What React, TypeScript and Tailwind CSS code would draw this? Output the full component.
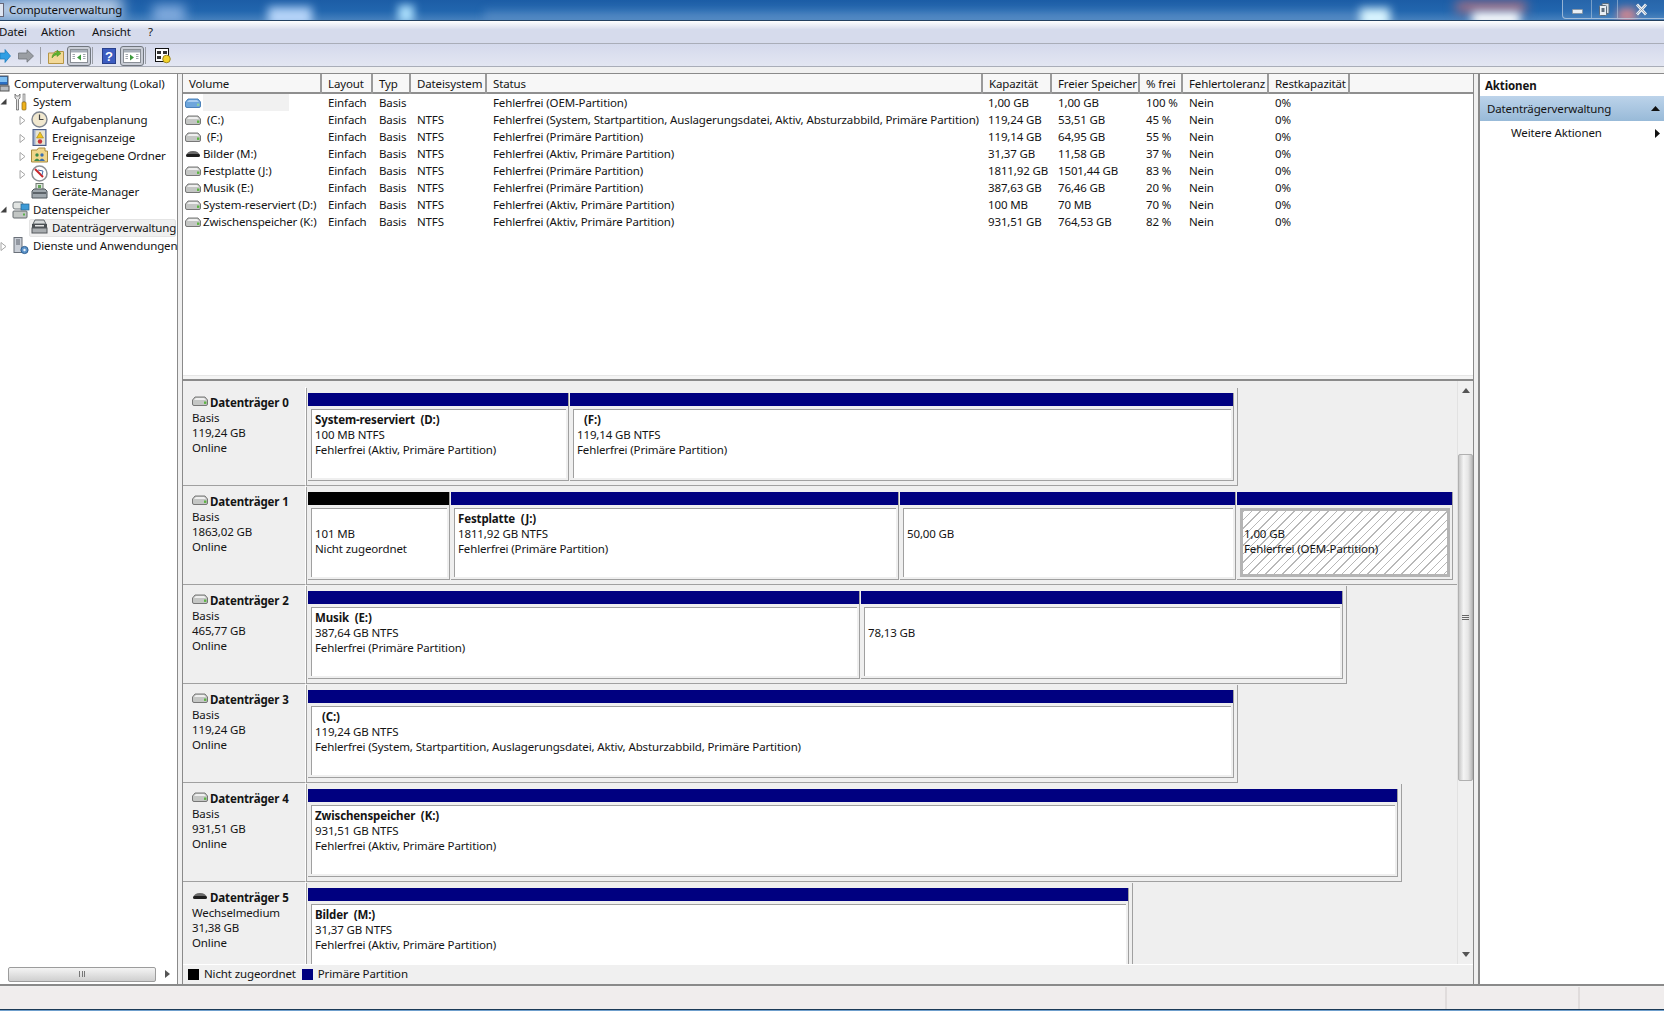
const font = "font-['Noto_Sans','Open_Sans',sans-serif]";

function Drive({ kind = 'gray' }: { kind?: 'gray' | 'blue' | 'dark' }) {
  if (kind === 'dark') {
    return (
      <svg width="16" height="10" viewBox="0 0 16 10" className="shrink-0">
        <path d="M1 7 Q2 2 8 2 Q14 2 15 7 Z" fill="#6a6a6a" />
        <rect x="1" y="5" width="14" height="3" rx="1.5" fill="#1f1f1f" />
      </svg>
    );
  }
  const body = kind === 'blue' ? '#6ea6dc' : '#c4c6c4';
  const top = kind === 'blue' ? '#a9cdf0' : '#efefef';
  const line = kind === 'blue' ? '#3f78b4' : '#6b6b6b';
  return (
    <svg width="16" height="10" viewBox="0 0 16 10" className="shrink-0">
      <path d="M0.5 4 L3 1 H13 L15.5 4 V8 Q15.5 9.5 14 9.5 H2 Q0.5 9.5 0.5 8 Z" fill={body} stroke={line} strokeWidth="0.9" />
      <path d="M2 4 L4 2 H12 L14 4 Z" fill={top} />
      <rect x="12" y="5.5" width="2.4" height="2.4" fill={kind === 'blue' ? '#8fd0a0' : '#5cb543'} />
    </svg>
  );
}

function Expander({ open }: { open?: boolean }) {
  return open ? (
    <svg width="7" height="7" viewBox="0 0 7 7"><path d="M6.5 0.5 V6.5 H0.5 Z" fill="#404040" /></svg>
  ) : (
    <svg width="7" height="9" viewBox="0 0 7 9"><path d="M1 0.5 L6 4.5 L1 8.5 Z" fill="#fff" stroke="#a6a6a6" /></svg>
  );
}

function TreeIcon({ name }: { name: string }) {
  switch (name) {
    case 'root':
      return (
        <svg width="16" height="18" viewBox="0 0 16 18">
          <rect x="0" y="1" width="11" height="9" fill="#2a6fc4" stroke="#555" />
          <rect x="1" y="2" width="9" height="5" fill="#7fc0f2" />
          <rect x="3" y="11" width="9" height="5" fill="#b8bcc0" stroke="#555" />
        </svg>
      );
    case 'tools':
      return (
        <svg width="16" height="18" viewBox="0 0 16 18">
          <path d="M2 1 V5 L3.5 6.5 V17 H5.5 V6.5 L7 5 V1 L5.5 3 H3.5 Z" fill="#e4e4e4" stroke="#555" strokeWidth="0.7" />
          <rect x="10" y="1" width="2" height="8" fill="#ddd" stroke="#666" strokeWidth="0.6" />
          <rect x="9" y="9" width="4" height="8" rx="1" fill="#efb21d" stroke="#8a6510" strokeWidth="0.7" />
        </svg>
      );
    case 'clock':
      return (
        <svg width="17" height="17" viewBox="0 0 17 17">
          <circle cx="8.5" cy="8.5" r="7.5" fill="#f1e8cf" stroke="#7f8690" strokeWidth="1.4" />
          <path d="M8.5 3.5 V8.5 H12.5" fill="none" stroke="#444" strokeWidth="1.2" />
        </svg>
      );
    case 'log':
      return (
        <svg width="15" height="17" viewBox="0 0 15 17">
          <rect x="1" y="0.5" width="13" height="16" fill="#9fb0d0" stroke="#4b5c86" />
          <rect x="3.5" y="1.5" width="9.5" height="14" fill="#e9e4cf" />
          <path d="M8 3 L11.5 9 H4.5 Z" fill="#f2c51c" stroke="#8a6e10" strokeWidth="0.5" />
          <circle cx="8" cy="12.5" r="2.2" fill="#c8323a" />
        </svg>
      );
    case 'share':
      return (
        <svg width="17" height="16" viewBox="0 0 17 16">
          <path d="M0.5 3 H6 L7.5 1 H14 V4 H16.5 V15 H0.5 Z" fill="#f0d68a" stroke="#a88a3c" />
          <circle cx="6" cy="8" r="1.7" fill="#3d8a4a" />
          <path d="M3 14 Q6 9 9 14 Z" fill="#3d8a4a" />
          <circle cx="11" cy="8" r="1.7" fill="#3a6fb0" />
          <path d="M8 14 Q11 9 14 14 Z" fill="#3a6fb0" />
        </svg>
      );
    case 'gauge':
      return (
        <svg width="17" height="17" viewBox="0 0 17 17">
          <circle cx="8.5" cy="8.5" r="7.5" fill="#fff" stroke="#8b8f94" strokeWidth="1.5" />
          <path d="M4 4 L12 12" stroke="#c9252b" strokeWidth="2" />
          <path d="M7 5 L12 6 L11 10" fill="none" stroke="#3f6aa8" strokeWidth="1" />
        </svg>
      );
    case 'device':
      return (
        <svg width="17" height="16" viewBox="0 0 17 16">
          <rect x="5" y="0.5" width="7" height="7" fill="#dfe4de" stroke="#6f7a70" />
          <rect x="7" y="2" width="3" height="3" fill="#63a85a" />
          <path d="M1 8 L3 6 H14 L16 8 V15 H1 Z" fill="#9fa7ad" stroke="#4f565c" />
          <rect x="2" y="9" width="13" height="2" fill="#5c6369" />
        </svg>
      );
    case 'storage':
      return (
        <svg width="18" height="18" viewBox="0 0 18 18">
          <rect x="1" y="1" width="10" height="7" rx="2" fill="#e1e4e2" stroke="#71787c" />
          <rect x="9" y="3" width="8" height="6" fill="#3d9ad6" stroke="#2a638e" strokeWidth="0.7" />
          <rect x="1" y="10" width="14" height="7" rx="1" fill="#c2c6c4" stroke="#646a6e" />
          <rect x="11" y="12.5" width="2" height="2" fill="#58b04a" />
        </svg>
      );
    case 'disk':
      return (
        <svg width="17" height="15" viewBox="0 0 17 15">
          <path d="M2 5 L4 1 H13 L15 5 Z" fill="#d6d9da" stroke="#5f6568" />
          <rect x="1" y="5" width="15" height="4" fill="#4b5054" />
          <rect x="1" y="9" width="15" height="5" fill="#a9adb0" stroke="#55595c" />
          <rect x="4" y="6" width="9" height="1.5" fill="#e6e6e6" />
        </svg>
      );
    default:
      return (
        <svg width="16" height="18" viewBox="0 0 16 18">
          <rect x="1" y="0.5" width="8" height="15" fill="#c9ced6" stroke="#6a7079" />
          <path d="M3 3 H7 M3 5 H7 M3 7 H7" stroke="#5b616a" />
          <circle cx="11.5" cy="13" r="3.6" fill="#5c93c9" stroke="#2d5f92" />
          <circle cx="11.5" cy="13" r="1.2" fill="#e8f1fa" />
        </svg>
      );
  }
}

const tree = [
  { label: 'Computerverwaltung (Lokal)', icon: 'root', icx: -3, tx: 14 },
  { label: 'System', icon: 'tools', icx: 13, tx: 33, exp: 'open', ex: 0 },
  { label: 'Aufgabenplanung', icon: 'clock', icx: 31, tx: 52, exp: 'closed', ex: 19 },
  { label: 'Ereignisanzeige', icon: 'log', icx: 32, tx: 52, exp: 'closed', ex: 19 },
  { label: 'Freigegebene Ordner', icon: 'share', icx: 31, tx: 52, exp: 'closed', ex: 19 },
  { label: 'Leistung', icon: 'gauge', icx: 31, tx: 52, exp: 'closed', ex: 19 },
  { label: 'Geräte-Manager', icon: 'device', icx: 31, tx: 52 },
  { label: 'Datenspeicher', icon: 'storage', icx: 12, tx: 33, exp: 'open', ex: 0 },
  { label: 'Datenträgerverwaltung', icon: 'disk', icx: 31, tx: 52, selected: true },
  { label: 'Dienste und Anwendungen', icon: 'services', icx: 13, tx: 33, exp: 'closed', ex: 0 },
];

const columns = ['Volume', 'Layout', 'Typ', 'Dateisystem', 'Status', 'Kapazität', 'Freier Speicher', '% frei', 'Fehlertoleranz', 'Restkapazität'];

const volumes = [
  { name: '', kind: 'blue', fs: '', status: 'Fehlerfrei (OEM-Partition)', cap: '1,00 GB', free: '1,00 GB', pct: '100 %' },
  { name: '(C:)', indent: true, kind: 'gray', fs: 'NTFS', status: 'Fehlerfrei (System, Startpartition, Auslagerungsdatei, Aktiv, Absturzabbild, Primäre Partition)', cap: '119,24 GB', free: '53,51 GB', pct: '45 %' },
  { name: '(F:)', indent: true, kind: 'gray', fs: 'NTFS', status: 'Fehlerfrei (Primäre Partition)', cap: '119,14 GB', free: '64,95 GB', pct: '55 %' },
  { name: 'Bilder (M:)', kind: 'dark', fs: 'NTFS', status: 'Fehlerfrei (Aktiv, Primäre Partition)', cap: '31,37 GB', free: '11,58 GB', pct: '37 %' },
  { name: 'Festplatte (J:)', kind: 'gray', fs: 'NTFS', status: 'Fehlerfrei (Primäre Partition)', cap: '1811,92 GB', free: '1501,44 GB', pct: '83 %' },
  { name: 'Musik (E:)', kind: 'gray', fs: 'NTFS', status: 'Fehlerfrei (Primäre Partition)', cap: '387,63 GB', free: '76,46 GB', pct: '20 %' },
  { name: 'System-reserviert (D:)', kind: 'gray', fs: 'NTFS', status: 'Fehlerfrei (Aktiv, Primäre Partition)', cap: '100 MB', free: '70 MB', pct: '70 %' },
  { name: 'Zwischenspeicher (K:)', kind: 'gray', fs: 'NTFS', status: 'Fehlerfrei (Aktiv, Primäre Partition)', cap: '931,51 GB', free: '764,53 GB', pct: '82 %' },
] as const;

type Part = { w: number; title?: string; indent?: boolean; size?: string; state?: string; black?: boolean; oem?: boolean };

const disks: { name: string; type: string; size: string; kind: 'gray' | 'dark'; full?: boolean; parts: Part[] }[] = [
  {
    name: 'Datenträger 0', type: 'Basis', size: '119,24 GB', kind: 'gray',
    parts: [
      { w: 261, title: 'System-reserviert  (D:)', size: '100 MB NTFS', state: 'Fehlerfrei (Aktiv, Primäre Partition)' },
      { w: 664, title: '(F:)', indent: true, size: '119,14 GB NTFS', state: 'Fehlerfrei (Primäre Partition)' },
    ],
  },
  {
    name: 'Datenträger 1', type: 'Basis', size: '1863,02 GB', kind: 'gray', full: true,
    parts: [
      { w: 142, black: true, size: '101 MB', state: 'Nicht zugeordnet' },
      { w: 448, title: 'Festplatte  (J:)', size: '1811,92 GB NTFS', state: 'Fehlerfrei (Primäre Partition)' },
      { w: 336, size: '50,00 GB' },
      { w: 216, oem: true, size: '1,00 GB', state: 'Fehlerfrei (OEM-Partition)' },
    ],
  },
  {
    name: 'Datenträger 2', type: 'Basis', size: '465,77 GB', kind: 'gray',
    parts: [
      { w: 552, title: 'Musik  (E:)', size: '387,64 GB NTFS', state: 'Fehlerfrei (Primäre Partition)' },
      { w: 482, size: '78,13 GB' },
    ],
  },
  {
    name: 'Datenträger 3', type: 'Basis', size: '119,24 GB', kind: 'gray',
    parts: [{ w: 926, title: '(C:)', indent: true, size: '119,24 GB NTFS', state: 'Fehlerfrei (System, Startpartition, Auslagerungsdatei, Aktiv, Absturzabbild, Primäre Partition)' }],
  },
  {
    name: 'Datenträger 4', type: 'Basis', size: '931,51 GB', kind: 'gray',
    parts: [{ w: 1090, title: 'Zwischenspeicher  (K:)', size: '931,51 GB NTFS', state: 'Fehlerfrei (Aktiv, Primäre Partition)' }],
  },
  {
    name: 'Datenträger 5', type: 'Wechselmedium', size: '31,38 GB', kind: 'dark',
    parts: [{ w: 821, title: 'Bilder  (M:)', size: '31,37 GB NTFS', state: 'Fehlerfrei (Aktiv, Primäre Partition)' }],
  },
];

function Partition({ part }: { part: Part }) {
  return (
    <div className="flex h-[88px] shrink-0 flex-col border-r border-b border-[#a0a0a0]" style={{ width: part.w }}>
      <div className={part.black ? 'h-[13px] bg-black' : 'h-[13px] bg-[#000080]'} />
      <div className="flex flex-1 pt-[3px] pr-[2px] pb-[2px] pl-[3px]">
        <div
          className={
            part.oem
              ? 'flex-1 border-[3px] border-[#b4b4b4] bg-[repeating-linear-gradient(135deg,#b8b8b8_0,#b8b8b8_1px,#ffffff_1px,#ffffff_6px)] pl-px'
              : 'flex-1 border-t border-l border-[#a0a0a0] bg-white pt-[2px] pl-[3px]'
          }
        >
          <div className={part.indent ? 'h-[15px] pl-[7px] font-bold leading-[15px]' : 'h-[15px] font-bold leading-[15px]'}>
            <span className="whitespace-pre">{part.title}</span>
          </div>
          <div className="h-[15px] leading-[15px]">{part.size}</div>
          <div className="h-[15px] leading-[15px]">{part.state}</div>
        </div>
      </div>
    </div>
  );
}

function DiskRow({ disk }: { disk: (typeof disks)[number] }) {
  return (
    <div className="flex h-[99px] shrink-0">
      <div className="w-[123px] shrink-0 border-r border-b border-r-white border-b-[#a0a0a0] bg-[#efefef] pt-[8px] pl-[9px] leading-[15px]">
        <div className="flex h-[15px] items-start gap-[2px] font-bold">
          <span className="pt-[1px]"><Drive kind={disk.kind} /></span>
          <span>{disk.name}</span>
        </div>
        <div>{disk.type}</div>
        <div>{disk.size}</div>
        <div>Online</div>
      </div>
      <div
        className={
          disk.full
            ? 'mt-px flex h-[98px] w-fit gap-px border-b border-l border-[#a0a0a0] pt-[5px] pr-[4px] pl-px'
            : 'mt-px flex h-[98px] w-fit gap-px border-r border-b border-l border-[#a0a0a0] pt-[5px] pr-[3px] pl-px'
        }
      >
        {disk.parts.map((p, i) => (
          <Partition key={i} part={p} />
        ))}
      </div>
    </div>
  );
}

function WindowButtons() {
  return (
    <div className="absolute top-0 right-0 flex h-[19px] w-[102px] rounded-bl-[4px] border-b border-l border-[#c5d5e5]/70 bg-white/5">
      <div className="flex w-[29px] items-center justify-center border-r border-[#c5d5e5]/50 pt-[5px]">
        <div className="h-[5px] w-[11px] rounded-[1px] border border-[#8a99a8] bg-[#e8eef4]" />
      </div>
      <div className="flex w-[26px] items-center justify-center border-r border-[#c5d5e5]/50">
        <svg width="11" height="13" viewBox="0 0 11 13">
          <rect x="3" y="0.5" width="7" height="10" rx="1" fill="#d5dee8" stroke="#5c6c7c" />
          <rect x="0.5" y="2.5" width="7" height="10" rx="1" fill="#e8eef4" stroke="#5c6c7c" />
          <rect x="2.5" y="5" width="3" height="4" fill="#5c6c7c" />
        </svg>
      </div>
      <div className="flex flex-1 items-center justify-center">
        <svg width="13" height="13" viewBox="0 0 13 13">
          <path d="M2 1.5 L11 11.5 M11 1.5 L2 11.5" fill="none" stroke="#e8eef4" strokeWidth="2.8" />
          <path d="M1 1 L12 12 M12 1 L1 12" stroke="#68788a" strokeWidth="0.5" />
        </svg>
      </div>
    </div>
  );
}

function TitleBar() {
  return (
    <div className="relative h-[21px] shrink-0 overflow-hidden border-b border-[#24405f] bg-[linear-gradient(180deg,#1c5da6_0%,#2266ae_55%,#4580bd_100%)]">
      <div className="absolute top-[-3px] left-[-8px] h-[24px] w-[130px] bg-[#b9cde6] blur-[7px]" />
      <div className="absolute top-[5px] left-[153px] h-[20px] w-[32px] bg-[#7fa9dc] blur-[6px]" />
      <div className="absolute top-[7px] left-[268px] h-[20px] w-[44px] bg-[#b4d3f8] blur-[5px]" />
      <div className="absolute top-[5px] left-[398px] h-[18px] w-[16px] bg-[#a8dcfb] blur-[4px]" />
      <div className="absolute top-[10px] left-[484px] h-[14px] w-[880px] bg-[#6595cc]/50 blur-[4px]" />
      <div className="absolute top-[8px] left-[1360px] h-[20px] w-[30px] bg-[#d9f5ff] blur-[5px]" />
      <div className="absolute top-[2px] left-[1456px] h-[10px] w-[70px] bg-[#b9707c] blur-[6px]" />
      <div className="absolute top-[12px] left-[1472px] h-[14px] w-[48px] bg-white blur-[5px]" />
      <div className="absolute top-[8px] left-[1618px] h-[14px] w-[18px] bg-[#c9808c] blur-[4px]" />
      <div className="relative flex h-full items-center pl-[9px] leading-none text-[#101010]">Computerverwaltung</div>
      <div className="absolute top-[3px] left-[-3px] h-[14px] w-[7px] border border-[#667] bg-[#dfe6f2]" />
      <WindowButtons />
    </div>
  );
}

function Toolbar() {
  const pressed = 'flex h-[20px] w-[24px] items-center justify-center rounded-[3px] border border-[#71777f] bg-[#c9cdd6]';
  const sep = 'h-[17px] w-px bg-[#9a9ea6]';
  const Pane = ({ side }: { side: 'left' | 'right' }) => (
    <svg width="18" height="14" viewBox="0 0 18 14">
      <rect x="0.5" y="0.5" width="17" height="13" fill="#fff" stroke="#8a8f96" />
      <rect x="1" y="1" width="16" height="2.5" fill="#a8b0ba" />
      {side === 'left' ? <path d="M11 5.5 L7 8.5 L11 11.5 Z" fill="#3d9a3d" /> : <path d="M7 5.5 L11 8.5 L7 11.5 Z" fill="#3d9a3d" />}
      <path d="M2.5 5.5 H5 M2.5 7.5 H5 M2.5 9.5 H5 M13 5.5 H15.5 M13 7.5 H15.5 M13 9.5 H15.5" stroke="#a0a5ac" />
    </svg>
  );
  return (
    <div className="flex h-[23px] shrink-0 items-center border-b border-[#a9adb8] bg-[linear-gradient(180deg,#d4d9ec,#e3e6f2)] pt-px">
      <svg width="11" height="14" viewBox="0 0 11 14" className="mr-[7px]">
        <path d="M0 4 H5 V0.5 L10.5 7 L5 13.5 V10 H0 Z" fill="#2f9fe4" stroke="#1b78b8" strokeWidth="0.7" />
      </svg>
      <svg width="16" height="14" viewBox="0 0 16 14" className="mr-[6px]">
        <path d="M0.5 4 H9 V0.8 L15.5 7 L9 13.2 V10 H0.5 Z" fill="#9a9ea3" stroke="#70747a" strokeWidth="0.8" />
      </svg>
      <div className={sep} />
      <svg width="16" height="16" viewBox="0 0 16 16" className="mr-[3px] ml-[7px]">
        <path d="M0.5 5 H6 L7 3.5 H15.5 V15.5 H0.5 Z" fill="#f3d998" stroke="#b59545" />
        <path d="M4 10 Q4 5 9 4.5 V2 L13 5.5 L9 8.5 V6.5 Q6 7 4 10 Z" fill="#5fb32f" stroke="#3e8a1c" strokeWidth="0.5" />
      </svg>
      <div className={pressed}><Pane side="left" /></div>
      <div className={`ml-[1px] ${sep}`} />
      <svg width="14" height="16" viewBox="0 0 14 16" className="mr-[4px] ml-[9px]">
        <rect x="0.5" y="0.5" width="13" height="15" fill="#3c5cc0" stroke="#28408c" />
        <text x="7" y="13" textAnchor="middle" fontSize="13" fontWeight="bold" fill="#fff" fontFamily="Liberation Sans">?</text>
      </svg>
      <div className={pressed}><Pane side="right" /></div>
      <div className={`ml-[1px] ${sep}`} />
      <svg width="17" height="16" viewBox="0 0 17 16" className="ml-[9px]">
        <rect x="0.5" y="0.5" width="13" height="13" fill="#fff" stroke="#111" />
        <path d="M2 3 H6 V6 H2 Z M8 3 H12 V6 H8 Z M2 8 H6 V11 H2 Z" fill="#333" />
        <circle cx="11.5" cy="11" r="3.8" fill="#f3d32a" stroke="#8a7410" strokeWidth="0.8" />
      </svg>
    </div>
  );
}

function TreePanel() {
  return (
    <div className="relative flex w-[178px] shrink-0 flex-col border-r border-[#8a8a8a] bg-white pt-px">
      <div className="flex-1">
        {tree.map(row => (
          <div key={row.label} className="relative h-[18px] whitespace-nowrap">
            {row.selected && <div className="absolute top-0 right-[1px] left-[29px] h-[18px] rounded-[2px] border border-[#e4e4e4] bg-[#efefef]" />}
            {row.exp && (
              <span className="absolute top-[5px]" style={{ left: row.ex }}>
                <Expander open={row.exp === 'open'} />
              </span>
            )}
            <span className="absolute top-0" style={{ left: row.icx }}>
              <TreeIcon name={row.icon} />
            </span>
            <span className="absolute top-0 leading-[18px]" style={{ left: row.tx }}>{row.label}</span>
          </div>
        ))}
      </div>
      <div className="mb-[2px] flex h-[16px] items-center">
        <div className="ml-[8px] flex h-[15px] w-[148px] items-center justify-center rounded-[2px] border border-[#9c9c9c] bg-[linear-gradient(180deg,#f4f4f4,#cfcfcf)]">
          <div className="h-[6px] w-[6px] border-x border-[#777] bg-[linear-gradient(90deg,transparent_2px,#777_2px,#777_3px,transparent_3px)]" />
        </div>
        <svg width="5" height="8" viewBox="0 0 5 8" className="ml-[9px]"><path d="M0 0 L5 4 L0 8 Z" fill="#555" /></svg>
      </div>
    </div>
  );
}

function VolumeTable() {
  const grid = 'grid grid-cols-[139px_51px_38px_76px_496px_69px_88px_43px_86px_81px_1fr]';
  return (
    <div className="flex h-[301px] shrink-0 flex-col bg-white">
      <div className={`${grid} h-[20px] shrink-0 border-b-2 border-[#8f8f8f] bg-[#f7f7f7]`}>
        {columns.map(c => (
          <div key={c} className="whitespace-nowrap border-r-2 border-r-[#9a9a9a] pl-[6px] leading-[20px]">{c}</div>
        ))}
        <div />
      </div>
      {volumes.map((v, i) => (
        <div key={i} className={`${grid} h-[17px] shrink-0 leading-[17px] whitespace-nowrap`}>
          <div className="flex items-center pl-[2px]">
            <Drive kind={v.kind} />
            {v.name ? (
              <span className={'indent' in v ? 'pl-[6px]' : 'pl-[2px]'}>{v.name}</span>
            ) : (
              <span className="ml-[2px] h-[17px] w-[86px] bg-[#f1f1f1]" />
            )}
          </div>
          <div className="pl-[6px]">Einfach</div>
          <div className="pl-[6px]">Basis</div>
          <div className="pl-[6px]">{v.fs}</div>
          <div className="pl-[6px]">{v.status}</div>
          <div className="pl-[5px]">{v.cap}</div>
          <div className="pl-[6px]">{v.free}</div>
          <div className="pl-[6px]">{v.pct}</div>
          <div className="pl-[6px]">Nein</div>
          <div className="pl-[6px]">0%</div>
        </div>
      ))}
    </div>
  );
}

function DiskScrollbar() {
  return (
    <div className="flex w-[16px] shrink-0 flex-col items-center border-l border-[#e2e2e2] bg-[#f0f0f0]">
      <svg width="8" height="5" viewBox="0 0 8 5" className="mt-[7px] mb-[61px]"><path d="M0 5 L4 0 L8 5 Z" fill="#555" /></svg>
      <div className="flex h-[327px] w-[15px] items-center justify-center rounded-[2px] border border-[#b0b0b0] bg-[linear-gradient(90deg,#c8c8c8,#f4f4f4_35%,#e6e6e6_70%,#bcbcbc)]">
        <div className="flex flex-col gap-[1px]">
          <div className="h-px w-[7px] bg-[#666]" />
          <div className="h-px w-[7px] bg-[#666]" />
          <div className="h-px w-[7px] bg-[#666]" />
        </div>
      </div>
      <svg width="8" height="5" viewBox="0 0 8 5" className="mt-auto mb-[7px]"><path d="M0 0 L8 0 L4 5 Z" fill="#555" /></svg>
    </div>
  );
}

function ActionsPanel() {
  return (
    <div className="flex flex-1 flex-col border-l-2 border-[#8a8a8a] bg-white">
      <div className="flex h-[22px] shrink-0 items-center pt-px pl-[5px] font-bold">Aktionen</div>
      <div className="flex h-[25px] shrink-0 items-center justify-between bg-[linear-gradient(180deg,#bcd3ea,#98bad8)] pr-[4px] pl-[7px]">
        <span>Datenträgerverwaltung</span>
        <svg width="9" height="5" viewBox="0 0 9 5"><path d="M0 5 L4.5 0 L9 5 Z" fill="#111" /></svg>
      </div>
      <div className="flex h-[24px] shrink-0 items-center justify-between pr-[4px] pl-[31px]">
        <span>Weitere Aktionen</span>
        <svg width="5" height="9" viewBox="0 0 5 9"><path d="M0 0 L5 4.5 L0 9 Z" fill="#111" /></svg>
      </div>
    </div>
  );
}

export default function App() {
  return (
    <div className={`${font} flex h-[1011px] w-[1664px] flex-col overflow-hidden bg-[#f0f0f0] text-[11.5px] tracking-[-0.13px] text-[#141414]`}>
      <TitleBar />

      <div className="flex h-[23px] shrink-0 items-center border-b border-[#a9adb8] bg-[linear-gradient(180deg,#ffffff_0%,#d6dbec_40%)] pl-0">
        <span className="-ml-[1px] w-[42px]">Datei</span>
        <span className="w-[51px]">Aktion</span>
        <span className="w-[56px]">Ansicht</span>
        <span>?</span>
      </div>

      <Toolbar />

      <div className="mt-[6px] flex h-[913px] shrink-0 border-t border-b-2 border-[#8a8a8a]">
        <TreePanel />
        <div className="ml-[4px] flex w-[1292px] shrink-0 flex-col border-x border-[#8a8a8a]">
          <VolumeTable />
          <div className="h-[6px] shrink-0 border-t border-b-2 border-t-[#e6e6e6] border-b-[#8a8a8a] bg-[#f4f4f4]" />
          <div className="flex h-[583px] shrink-0 bg-[#efefef]">
            <div className="flex-1 overflow-hidden pt-[6px]">
              {disks.map(d => (
                <DiskRow key={d.name} disk={d} />
              ))}
            </div>
            <DiskScrollbar />
          </div>
          <div className="flex h-[19px] flex-1 items-center border-t border-white bg-[#f0f0f0] pb-px pl-[5px]">
            <div className="mr-[5px] h-[11px] w-[11px] bg-black" />
            <span className="mr-[6px]">Nicht zugeordnet</span>
            <div className="mr-[5px] h-[11px] w-[11px] bg-[#000080]" />
            <span>Primäre Partition</span>
          </div>
        </div>
        <div className="ml-[4px] flex flex-1"><ActionsPanel /></div>
      </div>

      <div className="mt-px flex h-[22px] shrink-0 bg-[#f0eded]">
        <div className="w-[1447px] border-r-2 border-[#e0dcdc]" />
        <div className="w-[133px] border-r-2 border-[#e0dcdc]" />
      </div>
      <div className="flex-1 border-t border-[#1c3a57] bg-[#6f9fcc]" />
    </div>
  );
}
